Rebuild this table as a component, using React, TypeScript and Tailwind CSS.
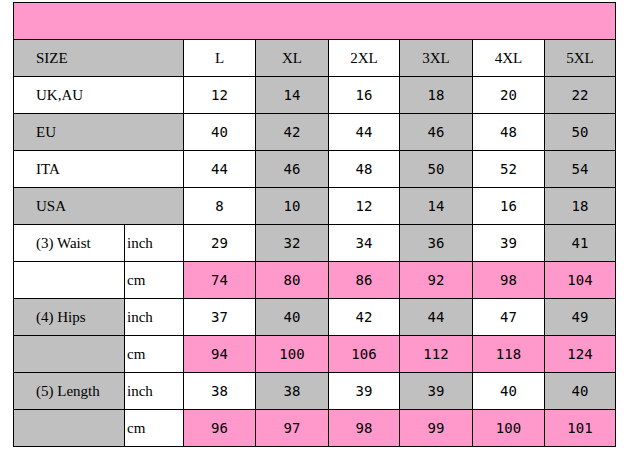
import React from 'react';

type Tone = 'w' | 'g' | 'p';

const bg: Record<Tone, string> = {
    w: 'bg-white',
    g: 'bg-[#c0c0c0]',
    p: 'bg-[#ff99cc]',
};

const sizes = ['L', 'XL', '2XL', '3XL', '4XL', '5XL'];
const alt: Tone[] = ['w', 'g', 'w', 'g', 'w', 'g'];
const pink: Tone[] = ['p', 'p', 'p', 'p', 'p', 'p'];

interface Row {
    label: string;
    labelTone: Tone;
    unit?: string;
    values: (string | number)[];
    tones: Tone[];
}

const rows: Row[] = [
    { label: 'UK,AU', labelTone: 'w', values: [12, 14, 16, 18, 20, 22], tones: alt },
    { label: 'EU', labelTone: 'g', values: [40, 42, 44, 46, 48, 50], tones: alt },
    { label: 'ITA', labelTone: 'w', values: [44, 46, 48, 50, 52, 54], tones: alt },
    { label: 'USA', labelTone: 'g', values: [8, 10, 12, 14, 16, 18], tones: alt },
    { label: '(3) Waist', labelTone: 'w', unit: 'inch', values: [29, 32, 34, 36, 39, 41], tones: alt },
    { label: '', labelTone: 'w', unit: 'cm', values: [74, 80, 86, 92, 98, 104], tones: pink },
    { label: '(4) Hips', labelTone: 'g', unit: 'inch', values: [37, 40, 42, 44, 47, 49], tones: alt },
    { label: '', labelTone: 'g', unit: 'cm', values: [94, 100, 106, 112, 118, 124], tones: pink },
    { label: '(5) Length', labelTone: 'g', unit: 'inch', values: [38, 38, 39, 39, 40, 40], tones: alt },
    { label: '', labelTone: 'g', unit: 'cm', values: [96, 97, 98, 99, 100, 101], tones: pink },
];

const serif = "font-['Liberation_Serif','Times_New_Roman',serif]";
const digits = "font-['DejaVu_Sans_Mono','Liberation_Mono',monospace]";
const cell = 'border border-black h-[37px] p-0';

export default function App() {
    return (
        <div className="w-[626px] h-[453px] bg-white pt-[2px] pl-[13px] text-black">
            <table className="table-fixed border-collapse w-[602px]">
                <colgroup>
                    <col className="w-[111px]" />
                    <col className="w-[59px]" />
                    <col className="w-[72px]" />
                    <col className="w-[73px]" />
                    <col className="w-[71px]" />
                    <col className="w-[73px]" />
                    <col className="w-[72px]" />
                    <col className="w-[71px]" />
                </colgroup>
                <tbody>
                    {/* pink banner */}
                    <tr>
                        <td colSpan={8} className={`${cell} ${bg.p}`} />
                    </tr>

                    {/* size header */}
                    <tr>
                        <td colSpan={2} className={`${cell} ${bg.g} ${serif} text-[15px] pl-[22px]`}>SIZE</td>
                        {sizes.map((s, i) => (
                            <td key={s} className={`${cell} ${bg[alt[i]]} ${serif} text-[15px] text-center`}>{s}</td>
                        ))}
                    </tr>

                    {rows.map((r, idx) => (
                        <tr key={idx}>
                            {r.unit ? (
                                <>
                                    <td className={`${cell} ${bg[r.labelTone]} ${serif} text-[15px] pl-[22px] whitespace-nowrap`}>{r.label}</td>
                                    <td className={`${cell} bg-white ${serif} text-[15px] pl-[2px]`}>{r.unit}</td>
                                </>
                            ) : (
                                <td colSpan={2} className={`${cell} ${bg[r.labelTone]} ${serif} text-[15px] pl-[22px]`}>{r.label}</td>
                            )}
                            {r.values.map((v, i) => (
                                <td key={i} className={`${cell} ${bg[r.tones[i]]} ${digits} text-[14px] text-center`}>{v}</td>
                            ))}
                        </tr>
                    ))}
                </tbody>
            </table>
        </div>
    );
}
